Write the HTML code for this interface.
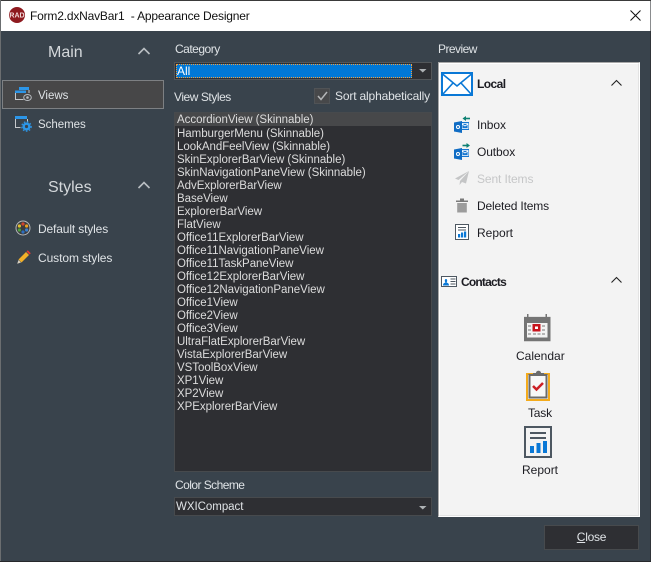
<!DOCTYPE html>
<html><head><meta charset="utf-8"><style>
html,body{margin:0;padding:0}
body{width:651px;height:562px;overflow:hidden;position:relative;background:#39434c;font-family:Tahoma,"Liberation Sans",sans-serif;font-size:12px;color:#dfe3e6}
.a{position:absolute;white-space:nowrap;line-height:14px}
svg{position:absolute;overflow:visible}
.d{color:#1c1c22}
.s{font-size:11.500px;letter-spacing:-.03px}
#list{position:absolute;left:174px;top:112px;width:256px;height:358px;background:#2e2f33;border:1px solid #474a4d}
#list div{position:absolute;left:2px;height:13px;line-height:13px;margin-top:1px;white-space:nowrap;color:#dcdcdc;font-size:11.500px;letter-spacing:-.03px}
#list div.sel{margin-top:0}
</style></head><body>
<div class="a" style="left:0;top:0;width:651px;height:31px;background:#fff;border-top:1px solid #3a3a3a;box-sizing:border-box"></div>
<div class="a" style="left:0;top:0;width:1px;height:562px;background:#6b6e70"></div>
<div class="a" style="left:650px;top:31px;width:1px;height:531px;background:#2f3338"></div>
<div class="a" style="left:650px;top:1px;width:1px;height:30px;background:#8a8c8e"></div>
<div class="a" style="left:0;top:561px;width:651px;height:1px;background:#26282b"></div>
<svg style="left:9px;top:7px" width="16" height="16"><circle cx="8" cy="8" r="8" fill="#8e1a1f"/><text x="8" y="10.500" font-size="7" font-weight="bold" fill="#f2dcdc" text-anchor="middle" font-family="Liberation Sans">RAD</text></svg>
<div class="a" style="left:30px;top:9px;color:#111;letter-spacing:-.19px">Form2.dxNavBar1&nbsp; - Appearance Designer</div>
<svg style="left:630px;top:10px" width="11" height="11"><path d="M.5.500l10 10M10.500.500l-10 10" stroke="#111" fill="none"/></svg>

<div class="a" style="left:48px;top:44px;font-size:16px;line-height:18px;color:#d4d8db">Main</div>
<svg style="left:138px;top:47px" width="12" height="8"><path d="M.5 7L6 1.500 11.500 7" stroke="#b9bec2" stroke-width="1.600" fill="none"/></svg>
<div class="a" style="left:2px;top:80px;width:162px;height:29px;box-sizing:border-box;background:#474748;border:1px solid #7d8083"></div>
<svg style="left:15px;top:87px" width="17" height="16"><rect x="4" y="0" width="10" height="3" fill="#2c96e8"/><rect x="0" y="3.500" width="11" height="2.500" fill="#2c96e8"/><path d="M.5 6v6.500h8M14 3v3" stroke="#c6c9cc" fill="none"/><ellipse cx="12.500" cy="10.500" rx="3.800" ry="3" fill="none" stroke="#b8bcc0"/><circle cx="12.500" cy="10.500" r="1.300" fill="#b8bcc0"/></svg>
<div class="a s" style="left:38px;top:89px">Views</div>
<svg style="left:15px;top:116px" width="17" height="16"><rect x="0" y="0" width="12" height="3" fill="#2c96e8"/><path d="M.5 3v8.500h5M12.500 3v3" stroke="#c6c9cc" fill="none"/><circle cx="11.500" cy="10.500" r="2.800" fill="none" stroke="#2c96e8" stroke-width="2.400"/><circle cx="11.500" cy="10.500" r="4.700" fill="none" stroke="#2c96e8" stroke-width="1.200" stroke-dasharray="1.600 1.600"/></svg>
<div class="a s" style="left:38px;top:118px">Schemes</div>

<div class="a" style="left:48px;top:179px;font-size:16px;line-height:18px;color:#d4d8db">Styles</div>
<svg style="left:138px;top:181px" width="12" height="8"><path d="M.5 7L6 1.500 11.500 7" stroke="#b9bec2" stroke-width="1.600" fill="none"/></svg>
<svg style="left:15px;top:220px" width="16" height="16"><circle cx="8" cy="8" r="7" fill="#3b3b3d" stroke="#b5b8ba" stroke-width="1"/><circle cx="8" cy="4" r="1.600" fill="#d2452c"/><circle cx="11.600" cy="6" r="1.600" fill="#e8a020"/><circle cx="11.600" cy="10" r="1.600" fill="#3a7fd0"/><circle cx="8" cy="12" r="1.600" fill="#2d6fc0"/><circle cx="4.400" cy="10" r="1.600" fill="#4ca040"/><circle cx="4.400" cy="6" r="1.600" fill="#e0c030"/></svg>
<div class="a" style="left:38px;top:222px;letter-spacing:-.14px">Default styles</div>
<svg style="left:16px;top:250px" width="15" height="15"><path d="M2.500 9.500L10 2l3 3-7.500 7.500z" fill="#f2b028"/><path d="M10.500 1.500l1.300-1.300 3 3L13.500 4.500z" fill="#e03a34"/><path d="M2.500 10l-1.300 3.800 3.800-1.300z" fill="#d8d0c0"/></svg>
<div class="a" style="left:38px;top:251px;letter-spacing:-.08px">Custom styles</div>

<div class="a" style="left:175px;top:42px;letter-spacing:-.5px">Category</div>
<div class="a" style="left:174px;top:62px;width:258px;height:18px;box-sizing:border-box;background:#2e2f33;border:1px solid #53575a"></div>
<div class="a" style="left:176px;top:64px;width:236px;height:14px;box-sizing:border-box;background:#0078d7;border:1px dotted #f0a040;color:#fff;line-height:12px;padding-left:0">All</div>
<svg style="left:419px;top:69px" width="8" height="4"><path d="M0 0h7.500L3.750 3.500z" fill="#aeb2b5"/></svg>
<div class="a" style="left:174px;top:90px;letter-spacing:-.45px">View Styles</div>
<div class="a" style="left:314px;top:88px;width:16px;height:16px;box-sizing:border-box;background:#47484a;border:1px solid #505356"></div>
<svg style="left:317px;top:91px" width="11" height="10"><path d="M1 5l3 3.500L10 1" stroke="#b4b6b8" stroke-width="1.500" fill="none"/></svg>
<div class="a" style="left:335px;top:89px;letter-spacing:-.16px">Sort alphabetically</div>

<div id="list">
<div class="sel" style="left:0;top:0;width:256px;height:13px;background:#47484a"></div>
<div style="top:0">AccordionView (Skinnable)</div>
<div style="top:14px">HamburgerMenu (Skinnable)</div>
<div style="top:27px">LookAndFeelView (Skinnable)</div>
<div style="top:40px">SkinExplorerBarView (Skinnable)</div>
<div style="top:53px">SkinNavigationPaneView (Skinnable)</div>
<div style="top:66px">AdvExplorerBarView</div>
<div style="top:79px">BaseView</div>
<div style="top:92px">ExplorerBarView</div>
<div style="top:105px">FlatView</div>
<div style="top:118px">Office11ExplorerBarView</div>
<div style="top:131px">Office11NavigationPaneView</div>
<div style="top:144px">Office11TaskPaneView</div>
<div style="top:157px">Office12ExplorerBarView</div>
<div style="top:170px">Office12NavigationPaneView</div>
<div style="top:183px">Office1View</div>
<div style="top:196px">Office2View</div>
<div style="top:209px">Office3View</div>
<div style="top:222px">UltraFlatExplorerBarView</div>
<div style="top:235px">VistaExplorerBarView</div>
<div style="top:248px">VSToolBoxView</div>
<div style="top:261px">XP1View</div>
<div style="top:274px">XP2View</div>
<div style="top:287px">XPExplorerBarView</div>
</div>

<div class="a" style="left:175px;top:478px;letter-spacing:-.55px">Color Scheme</div>
<div class="a s" style="left:174px;top:497px;width:258px;height:19px;box-sizing:border-box;background:#2e2f33;border:1px solid #474a4d;line-height:19px;padding-left:1px">WXICompact</div>
<svg style="left:419px;top:506px" width="8" height="4"><path d="M0 0h7.500L3.750 3.500z" fill="#aeb2b5"/></svg>

<div class="a" style="left:438px;top:42px;letter-spacing:-.55px">Preview</div>
<div class="a" style="left:438px;top:62px;width:202px;height:455px;box-sizing:border-box;background:#f3f3f3;border:1px solid;border-color:#a8a8a8 #fff #fff #a8a8a8"></div>
<div class="a" style="left:439px;top:63px;width:200px;height:453px;box-sizing:border-box;border:1px solid;border-color:#fff #e3e3e3 #e3e3e3 #fff"></div>

<svg style="left:441px;top:72px" width="32" height="24"><rect x="1" y="1" width="30" height="22" fill="#fff" stroke="#0a78d6" stroke-width="2"/><path d="M1.500 2l14.500 12L30.500 2M2 22l10-11M30 22L20 11" stroke="#0a78d6" stroke-width="1.600" fill="none"/></svg>
<div class="a d" style="left:477px;top:77px;font-weight:bold;letter-spacing:-.55px">Local</div>
<svg style="left:611px;top:79px" width="11" height="7"><path d="M.5 6.500L5.500 1.500 10.500 6.500" stroke="#222" stroke-width="1.100" fill="none"/></svg>

<svg style="left:454px;top:116px" width="17" height="17"><rect x="7" y="6" width="8" height="8" fill="#1777d0"/><path d="M8 7.500h6v5H8zM8 8l3 2 3-2" stroke="#fff" stroke-width=".8" fill="none"/><path d="M0 6.500L8 5v12l-8-1.500z" fill="#0f6cc4"/><circle cx="4" cy="11" r="1.500" fill="none" stroke="#fff"/><path d="M16 2.500h-5" stroke="#0d8072" stroke-width="1.600"/><path d="M12 0L8.500 2.500 12 5z" fill="#0d8072"/></svg>
<div class="a d" style="left:477px;top:118px;letter-spacing:-.1px">Inbox</div>
<svg style="left:454px;top:143px" width="17" height="17"><rect x="7" y="6" width="8" height="8" fill="#1777d0"/><path d="M8 7.500h6v5H8zM8 8l3 2 3-2" stroke="#fff" stroke-width=".8" fill="none"/><path d="M0 6.500L8 5v12l-8-1.500z" fill="#0f6cc4"/><circle cx="4" cy="11" r="1.500" fill="none" stroke="#fff"/><path d="M8.500 2.500h5" stroke="#0d8072" stroke-width="1.600"/><path d="M12.500 0L16 2.500 12.500 5z" fill="#0d8072"/></svg>
<div class="a d" style="left:477px;top:145px;letter-spacing:-.1px">Outbox</div>
<svg style="left:455px;top:171px" width="14" height="14"><path d="M14 0L0 7.500l3.500 1.500zM14 0L5 10l-.5 4 2.500-3 4 1.500z" fill="#c4c5c6"/></svg>
<div class="a" style="left:477px;top:172px;color:#c6c7c8;letter-spacing:-.1px">Sent Items</div>
<svg style="left:456px;top:198px" width="12" height="15"><path d="M0 2.500h12v1.500H0zM4 .5h4v2H4z" fill="#7a7a7a"/><path d="M1.200 5h9.600v9.500H1.200z" fill="#9c9c9c"/></svg>
<div class="a d" style="left:477px;top:199px;letter-spacing:-.16px">Deleted Items</div>
<svg style="left:455px;top:224px" width="14" height="16"><rect x=".5" y=".5" width="13" height="15" fill="#fff" stroke="#4d5761"/><path d="M3 3.500h8M3 6h8" stroke="#4d5761"/><path d="M3 10h2.200v3.500H3zM6 8.500h2.200v5H6zM9 7.500h2.200v6H9z" fill="#0a78d6"/></svg>
<div class="a d" style="left:477px;top:226px">Report</div>

<svg style="left:441px;top:276px" width="16" height="11"><rect x=".5" y=".5" width="15" height="10" fill="#fff" stroke="#4d5761"/><path d="M2 9.500c0-2 1-2.500 2.500-3-1-1-1-3.500.5-3.500s1.500 2.500.5 3.500c1.500.5 2.500 1 2.500 3z" fill="#0a78d6"/><path d="M9.500 3h5M9.500 5.500h5M9.500 8h5" stroke="#4d5761"/></svg>
<div class="a d" style="left:461px;top:275px;font-weight:bold;letter-spacing:-.8px">Contacts</div>
<svg style="left:611px;top:276px" width="11" height="7"><path d="M.5 6.500L5.500 1.500 10.500 6.500" stroke="#222" stroke-width="1.100" fill="none"/></svg>

<svg style="left:524px;top:314px" width="27" height="27"><path d="M0 3h3V0h1.500v3h17V0H23v3h3.500v26H0z" fill="#747474" transform="scale(1 .94)"/><rect x="3" y="9" width="20.500" height="14.500" fill="#f3f3f3"/><path d="M4 11h3v2H4zM18 11h3v2h-3zM4 15h3v2H4zM18 15h3v2h-3zM4 19h3v2H4zM9 19h3v2H9zM13.500 19h3v2h-3zM18 19h3v2h-3z" fill="#b5b5b5"/><rect x="8.500" y="10" width="8" height="7.500" fill="#c8141c"/><rect x="11" y="12.500" width="3" height="2.500" fill="#fff"/></svg>
<div class="a d" style="left:516px;top:349px">Calendar</div>
<svg style="left:526px;top:369px" width="25" height="32"><rect x="1" y="5" width="22" height="26" fill="none" stroke="#f4ab1c" stroke-width="2"/><rect x="3.500" y="6" width="17" height="22.500" fill="#f7f7f7" stroke="#6b6b6b" stroke-width="2"/><path d="M7 4h3c0-3 5-3 5 0h3v3H7z" fill="#6b6b6b"/><path d="M7 17l3.500 3.500L17 14" stroke="#cc1f25" stroke-width="2.500" fill="none"/></svg>
<div class="a d" style="left:528px;top:406px;letter-spacing:-.2px">Task</div>
<svg style="left:524px;top:426px" width="28" height="32"><rect x="1" y="1" width="26" height="30" fill="#f3f3f3" stroke="#4d5761" stroke-width="2"/><path d="M6 7h16M6 12h16" stroke="#4d5761" stroke-width="2"/><path d="M6 20h4v7H6zM12.500 17h4v10h-4zM19 15h4v12h-4z" fill="#0a78d6"/></svg>
<div class="a d" style="left:522px;top:463px">Report</div>

<div class="a" style="left:544px;top:525px;width:95px;height:25px;box-sizing:border-box;background:#2e2f33;border:1px solid #474a4d;text-align:center;line-height:23px;letter-spacing:-.25px"><u>C</u>lose</div>
</body></html>
